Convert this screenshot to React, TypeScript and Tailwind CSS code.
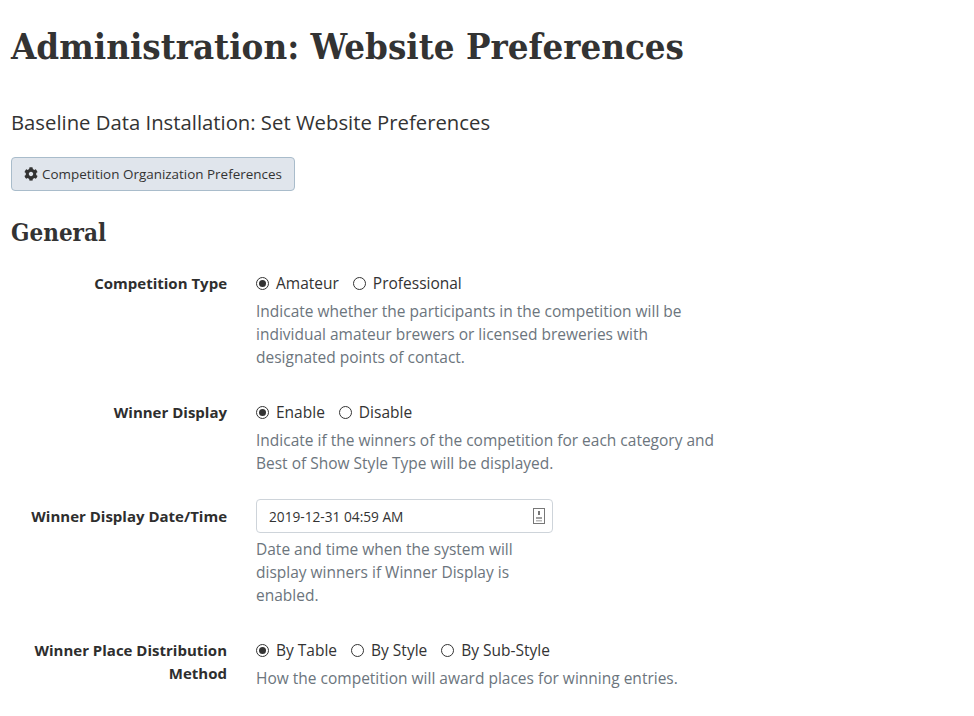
import React from "react";
import { FaCog } from "react-icons/fa";

function Radio({ label, checked }: { label: string; checked?: boolean }) {
  return (
    <label className="flex items-center mr-[14px]">
      <span className="w-[13px] h-[13px] rounded-full border border-[#333] bg-white flex items-center justify-center mr-[7px]">
        {checked && <span className="w-[7px] h-[7px] rounded-full bg-[#333]" />}
      </span>
      <span>{label}</span>
    </label>
  );
}

function Row({ label, children, className, labelClass }: { label: React.ReactNode; children: React.ReactNode; className?: string; labelClass?: string }) {
  return (
    <div className={`flex ${className ?? ""}`}>
      <div className={`w-[227px] shrink-0 text-right font-bold text-[15px] text-[#2e2e2e] ${labelClass ?? ""}`}>{label}</div>
      <div className="ml-[29px] w-[462px]">{children}</div>
    </div>
  );
}

const heading = "font-['DejaVu_Serif_Condensed','DejaVu_Serif',serif] font-bold";

export default function App() {
  return (
    <div className="font-['Open_Sans','Noto_Sans',sans-serif] text-[15.5px] leading-[23px] text-[#333333] bg-white h-[716px] overflow-hidden">
      <div className="pl-[11px]">
        <h1 className={`${heading} text-[36.3px] leading-[47px] pt-[23px]`}>Administration: Website Preferences</h1>
        <p className="text-[20.3px] leading-[28px] mt-[38px]">Baseline Data Installation: Set Website Preferences</p>
        <button className="mt-[21px] h-[34px] px-[12px] rounded-[4px] border border-[#a9bccb] bg-[#e0e5ec] text-[13.45px] flex items-center gap-[4px]">
          <FaCog className="w-[14px] h-[14px]" />Competition Organization Preferences
        </button>
        <h2 className={`${heading} text-[24px] leading-[32px] mt-[26px]`}>General</h2>
      </div>
      <Row label="Competition Type" className="mt-[23px]">
        <div className="flex"><Radio label="Amateur" checked /><Radio label="Professional" /></div>
        <p className="text-[#6c757d] mt-[5px]">Indicate whether the participants in the competition will be individual amateur brewers or licensed breweries with designated points of contact.</p>
      </Row>
      <Row label="Winner Display" className="mt-[32px]">
        <div className="flex"><Radio label="Enable" checked /><Radio label="Disable" /></div>
        <p className="text-[#6c757d] mt-[5px]">Indicate if the winners of the competition for each category and Best of Show Style Type will be displayed.</p>
      </Row>
      <Row label="Winner Display Date/Time" className="mt-[24px]" labelClass="pt-[6px]">
        <div className="w-[297px]">
          <div className="h-[34px] rounded-[4px] border border-[#ced4da] pl-[12px] pr-[7px] flex items-center justify-between text-[13.7px]">
            <span>2019-12-31 04:59 AM</span>
            <svg width="12" height="16" viewBox="0 0 12 16" className="text-[#777]">
              <rect x="0.5" y="0.5" width="11" height="15" fill="none" stroke="currentColor" />
              <rect x="5" y="3" width="2" height="4" fill="currentColor" />
              <rect x="3" y="9" width="6" height="2" fill="currentColor" opacity="0.7" />
              <rect x="3" y="12" width="6" height="1.5" fill="currentColor" opacity="0.5" />
            </svg>
          </div>
          <p className="text-[#6c757d] mt-[5px] pr-[20px]">Date and time when the system will display winners if Winner Display is enabled.</p>
        </div>
      </Row>
      <Row label={<>Winner Place Distribution<br />Method</>} className="mt-[32px]">
        <div className="flex"><Radio label="By Table" checked /><Radio label="By Style" /><Radio label="By Sub-Style" /></div>
        <p className="text-[#6c757d] mt-[5px]">How the competition will award places for winning entries.</p>
      </Row>
    </div>
  );
}
